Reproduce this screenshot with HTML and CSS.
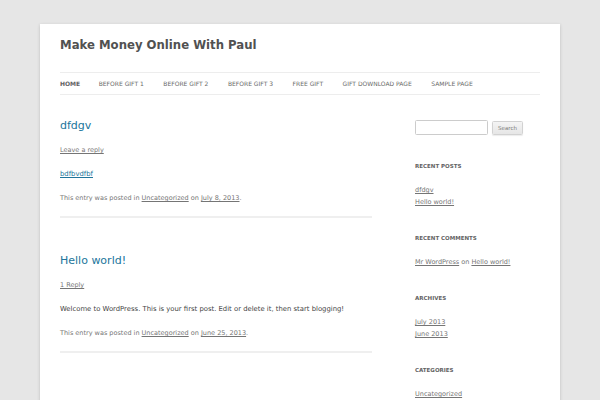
FILE: index.html
```html
<!DOCTYPE html>
<html lang="en">
<head>
    <meta charset="UTF-8">
    <meta name="viewport" content="width=device-width, initial-scale=1.0">
    <title>Make Money Online With Paul</title>
    <link rel="stylesheet" href="styles.css">
</head>
<body>
    <div class="site">
        <header class="site-header">
            <h1 class="site-title"><a href="#">Make Money Online With Paul</a></h1>
            <nav class="main-navigation">
                <ul class="nav-menu">
                    <li class="current-menu-item"><a href="#">Home</a></li>
                    <li><a href="#">Before Gift 1</a></li>
                    <li><a href="#">Before Gift 2</a></li>
                    <li><a href="#">Before Gift 3</a></li>
                    <li><a href="#">Free Gift</a></li>
                    <li><a href="#">Gift Download Page</a></li>
                    <li><a href="#">Sample Page</a></li>
                </ul>
            </nav>
        </header>

        <div class="site-content">
            <div class="primary">
                <article class="post">
                    <header class="entry-header">
                        <h1 class="entry-title"><a href="#">dfdgv</a></h1>
                        <div class="comments-link"><a href="#">Leave a reply</a></div>
                    </header>
                    <div class="entry-content">
                        <p><a href="#">bdfbvdfbf</a></p>
                    </div>
                    <footer class="entry-meta">
                        This entry was posted in <a href="#">Uncategorized</a> on <a href="#">July 8, 2013</a>.
                    </footer>
                </article>

                <article class="post">
                    <header class="entry-header">
                        <h1 class="entry-title"><a href="#">Hello world!</a></h1>
                        <div class="comments-link"><a href="#">1 Reply</a></div>
                    </header>
                    <div class="entry-content">
                        <p>Welcome to WordPress. This is your first post. Edit or delete it, then start blogging!</p>
                    </div>
                    <footer class="entry-meta">
                        This entry was posted in <a href="#">Uncategorized</a> on <a href="#">June 25, 2013</a>.
                    </footer>
                </article>
            </div>

            <aside class="secondary">
                <div class="widget widget-search">
                    <form class="search-form">
                        <input type="text" class="search-field">
                        <button type="button" class="search-submit">Search</button>
                    </form>
                </div>

                <div class="widget">
                    <h3 class="widget-title">Recent Posts</h3>
                    <ul>
                        <li><a href="#">dfdgv</a></li>
                        <li><a href="#">Hello world!</a></li>
                    </ul>
                </div>

                <div class="widget">
                    <h3 class="widget-title">Recent Comments</h3>
                    <ul>
                        <li><a href="#">Mr WordPress</a> on <a href="#">Hello world!</a></li>
                    </ul>
                </div>

                <div class="widget">
                    <h3 class="widget-title">Archives</h3>
                    <ul>
                        <li><a href="#">July 2013</a></li>
                        <li><a href="#">June 2013</a></li>
                    </ul>
                </div>

                <div class="widget">
                    <h3 class="widget-title">Categories</h3>
                    <ul>
                        <li><a href="#">Uncategorized</a></li>
                    </ul>
                </div>
            </aside>
        </div>
    </div>
</body>
</html>
```

FILE: styles.css
```css
* {
    margin: 0;
    padding: 0;
    box-sizing: border-box;
}

body {
    font-family: "DejaVu Sans", sans-serif;
    font-size: 7px;
    color: #444;
    background: #e6e6e6;
}

a {
    color: #21759b;
}

.site {
    max-width: 520px;
    margin: 24px auto;
    padding: 0 20px;
    background: #fff;
    box-shadow: 0 1px 3px rgba(100, 100, 100, 0.3);
    overflow: hidden;
}

.site-header {
    padding-top: 12px;
}

.site-title {
    font-size: 11.7px;
    line-height: 18px;
    font-weight: bold;
}

.site-title a {
    color: #515151;
    text-decoration: none;
}

.main-navigation {
    margin-top: 18px;
}

.nav-menu {
    list-style: none;
    display: flex;
    border-top: 1px solid #ededed;
    border-bottom: 1px solid #ededed;
}

.nav-menu li {
    margin-right: 19.5px;
    font-size: 6px;
    line-height: 21px;
    text-transform: uppercase;
}

.nav-menu .current-menu-item {
    margin-right: 18.5px;
}

.nav-menu a {
    color: #6a6a6a;
    text-decoration: none;
}

.nav-menu .current-menu-item a {
    color: #636363;
    font-weight: bold;
}

.site-content {
    display: flex;
    justify-content: space-between;
    margin-top: 24px;
}

.primary {
    width: 312px;
}

.secondary {
    width: 125px;
}

.post {
    border-bottom: 2px solid #efefef;
    margin-bottom: 36px;
    padding-bottom: 12px;
}

.entry-header {
    margin-bottom: 12px;
}

.entry-title {
    font-size: 11px;
    line-height: 13px;
    font-weight: normal;
}

.entry-title a {
    text-decoration: none;
}

.comments-link {
    margin-top: 12px;
    font-size: 6.5px;
    line-height: 12px;
}

.comments-link a,
.entry-meta a {
    color: #757575;
}

.entry-content p {
    font-size: 6.85px;
    line-height: 12px;
}

.entry-meta {
    margin-top: 12px;
    font-size: 6.5px;
    line-height: 12px;
    color: #757575;
}

.widget {
    margin-bottom: 24px;
}

.widget-search {
    padding-top: 1px;
    margin-bottom: 25px;
}

.search-form {
    display: flex;
    align-items: center;
    gap: 4px;
}

.search-field {
    width: 73px;
    height: 15px;
    border: 1px solid #ccc;
    border-radius: 1.5px;
    font-family: inherit;
    font-size: 6px;
}

.search-submit {
    height: 14px;
    padding: 0 5px;
    border: 1px solid #d2d2d2;
    border-radius: 1.5px;
    background: linear-gradient(to bottom, #f4f4f4, #e6e6e6);
    box-shadow: 0 1px 1px rgba(64, 64, 64, 0.1);
    color: #7c7c7c;
    font-family: inherit;
    font-size: 5.5px;
}

.widget-title {
    margin-bottom: 12px;
    font-size: 5.5px;
    line-height: 12px;
    font-weight: bold;
    text-transform: uppercase;
    color: #636363;
}

.widget ul {
    list-style: none;
}

.widget li {
    font-size: 6.5px;
    line-height: 12px;
    color: #757575;
}

.widget li a {
    color: #757575;
}
```
